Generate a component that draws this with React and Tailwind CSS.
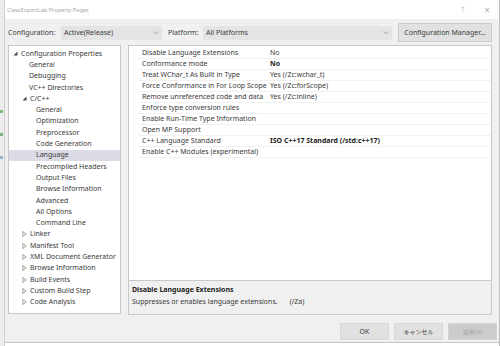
const tree = [
    { label: 'Configuration Properties', indent: 0, arrow: 'open' },
    { label: 'General', indent: 1 },
    { label: 'Debugging', indent: 1 },
    { label: 'VC++ Directories', indent: 1 },
    { label: 'C/C++', indent: 1, arrow: 'open' },
    { label: 'General', indent: 2 },
    { label: 'Optimization', indent: 2 },
    { label: 'Preprocessor', indent: 2 },
    { label: 'Code Generation', indent: 2 },
    { label: 'Language', indent: 2, selected: true },
    { label: 'Precompiled Headers', indent: 2 },
    { label: 'Output Files', indent: 2 },
    { label: 'Browse Information', indent: 2 },
    { label: 'Advanced', indent: 2 },
    { label: 'All Options', indent: 2 },
    { label: 'Command Line', indent: 2 },
    { label: 'Linker', indent: 1, arrow: 'closed' },
    { label: 'Manifest Tool', indent: 1, arrow: 'closed' },
    { label: 'XML Document Generator', indent: 1, arrow: 'closed' },
    { label: 'Browse Information', indent: 1, arrow: 'closed' },
    { label: 'Build Events', indent: 1, arrow: 'closed' },
    { label: 'Custom Build Step', indent: 1, arrow: 'closed' },
    { label: 'Code Analysis', indent: 1, arrow: 'closed' },
];

const props = [
    ['Disable Language Extensions', 'No'],
    ['Conformance mode', 'No', true],
    ['Treat WChar_t As Built in Type', 'Yes (/Zc:wchar_t)'],
    ['Force Conformance in For Loop Scope', 'Yes (/Zc:forScope)'],
    ['Remove unreferenced code and data', 'Yes (/Zc:inline)'],
    ['Enforce type conversion rules', ''],
    ['Enable Run-Time Type Information', ''],
    ['Open MP Support', ''],
    ['C++ Language Standard', 'ISO C++17 Standard (/std:c++17)', true],
    ['Enable C++ Modules (experimental)', ''],
];

const indentClass = ['pl-[4px]', 'pl-[13px]', 'pl-[27px]'];

function Chevron() {
    return (
        <svg width="6" height="4" viewBox="0 0 6 4" className="shrink-0">
            <path d="M0.5 0.5 L3 3 L5.5 0.5" fill="none" stroke="#9a9a9a" strokeWidth="0.8" />
        </svg>
    );
}

function TreeArrow({ type }) {
    if (type === 'open') {
        return (
            <svg width="5" height="5" viewBox="0 0 5 5" className="mr-[3px] shrink-0">
                <path d="M4.5 0.5 L4.5 4.5 L0.5 4.5 Z" fill="#444" />
            </svg>
        );
    }
    return (
        <svg width="5" height="6" viewBox="0 0 5 6" className="mr-[3px] shrink-0">
            <path d="M0.8 0.5 L4.2 3 L0.8 5.5 Z" fill="none" stroke="#888" strokeWidth="0.8" />
        </svg>
    );
}

export default function App() {
    return (
        <div className="flex h-[346px] w-[500px] overflow-hidden bg-white font-['Noto_Sans','Open_Sans',sans-serif] text-[7px] leading-[10px] text-[#3a3a3a]">
            <div className="flex w-[5px] flex-col gap-[20px] border-r border-[#cfcfcf] bg-[#ececec] pt-[110px]">
                <div className="h-[3px] w-[3px] bg-[#7cb87c]" />
                <div className="h-[3px] w-[3px] bg-[#7cb87c]" />
                <div className="h-[3px] w-[3px] bg-[#9ab0c8]" />
            </div>
            <div className="flex flex-1 flex-col border-r border-[#bdbdbd]">
                <div className="flex h-[19px] items-center justify-between bg-white pl-[2px] pr-[9px] text-[5.6px] text-[#a8a8a8]">
                    <span>ClassExportLab Property Pages</span>
                    <div className="flex items-center gap-[20px] text-[7px] text-[#b5b5b5]">
                        <span>?</span>
                        <span className="text-[10px] leading-none">×</span>
                    </div>
                </div>
                <div className="flex flex-1 flex-col border-b border-[#c4c4c4] bg-[#f0f0f0] pl-[3px] pr-[2px]">
                    <div className="mt-[4px] flex h-[19px] items-center">
                        <span className="w-[53px]">Configuration:</span>
                        <div className="flex h-[14px] w-[101px] items-center justify-between bg-[#e4e4e4] pl-[3px] pr-[3px]">
                            <span>Active(Release)</span>
                            <Chevron />
                        </div>
                        <span className="ml-[6px] w-[35px]">Platform:</span>
                        <div className="flex h-[14px] w-[189px] items-center justify-between bg-[#e4e4e4] pl-[3px] pr-[3px]">
                            <span>All Platforms</span>
                            <Chevron />
                        </div>
                        <div className="ml-[6px] flex h-[19px] w-[94px] items-center justify-center whitespace-nowrap border border-[#cdcdcd] bg-[#e1e1e1]">
                            Configuration Manager...
                        </div>
                    </div>
                    <div className="mt-[3px] flex gap-[7px]">
                        <div className="flex h-[269px] w-[113px] flex-col border border-[#c8c8c8] bg-white pt-[2px]">
                            {tree.map((t, i) => (
                                <div
                                    key={i}
                                    className={`flex h-[11.3px] items-center whitespace-nowrap ${t.arrow ? indentClass[t.indent] : t.indent === 1 ? 'pl-[20px]' : 'pl-[27px]'} ${t.selected ? 'bg-[#dcdce6]' : ''}`}
                                >
                                    {t.arrow && <TreeArrow type={t.arrow} />}
                                    <span>{t.label}</span>
                                </div>
                            ))}
                        </div>
                        <div className="flex w-[364px] flex-col">
                            <div className="flex h-[236px] flex-col border border-[#c8c8c8] bg-white pl-[9px] pt-[2px]">
                                {props.map(([name, value, bold], i) => (
                                    <div key={i} className="flex h-[11px] items-center border-b border-[#f1f1f1] whitespace-nowrap">
                                        <span className="w-[132px] pl-[4px]">{name}</span>
                                        <span className={bold ? 'font-bold text-[#222]' : ''}>{value}</span>
                                    </div>
                                ))}
                            </div>
                            <div className="flex h-[34px] flex-col border border-t-0 border-[#c8c8c8] bg-[#f0f0f0] pl-[3px] pt-[3px]">
                                <span className="font-bold leading-[12px] text-[#222]">Disable Language Extensions</span>
                                <span className="leading-[12px]">
                                    Suppresses or enables language extensions.<span className="ml-[12px]">(/Za)</span>
                                </span>
                            </div>
                        </div>
                    </div>
                    <div className="mt-[8px] flex justify-end gap-[5px]">
                        <div className="flex h-[17px] w-[49px] items-center justify-center border border-[#d8d8d8] bg-[#e1e1e1]">OK</div>
                        <div className="flex h-[17px] w-[49px] items-center justify-center border border-[#d8d8d8] bg-[#e1e1e1] font-['Noto_Sans_CJK_JP',sans-serif] text-[6px]">
                            キャンセル
                        </div>
                        <div className="flex h-[17px] w-[49px] items-center justify-center border border-[#d4d4d4] bg-[#cccccc] font-['Noto_Sans_CJK_JP',sans-serif] text-[6px] text-[#a6a6a6]">
                            適用(A)
                        </div>
                    </div>
                </div>
                <div className="h-[3px] bg-white" />
            </div>
        </div>
    );
}
